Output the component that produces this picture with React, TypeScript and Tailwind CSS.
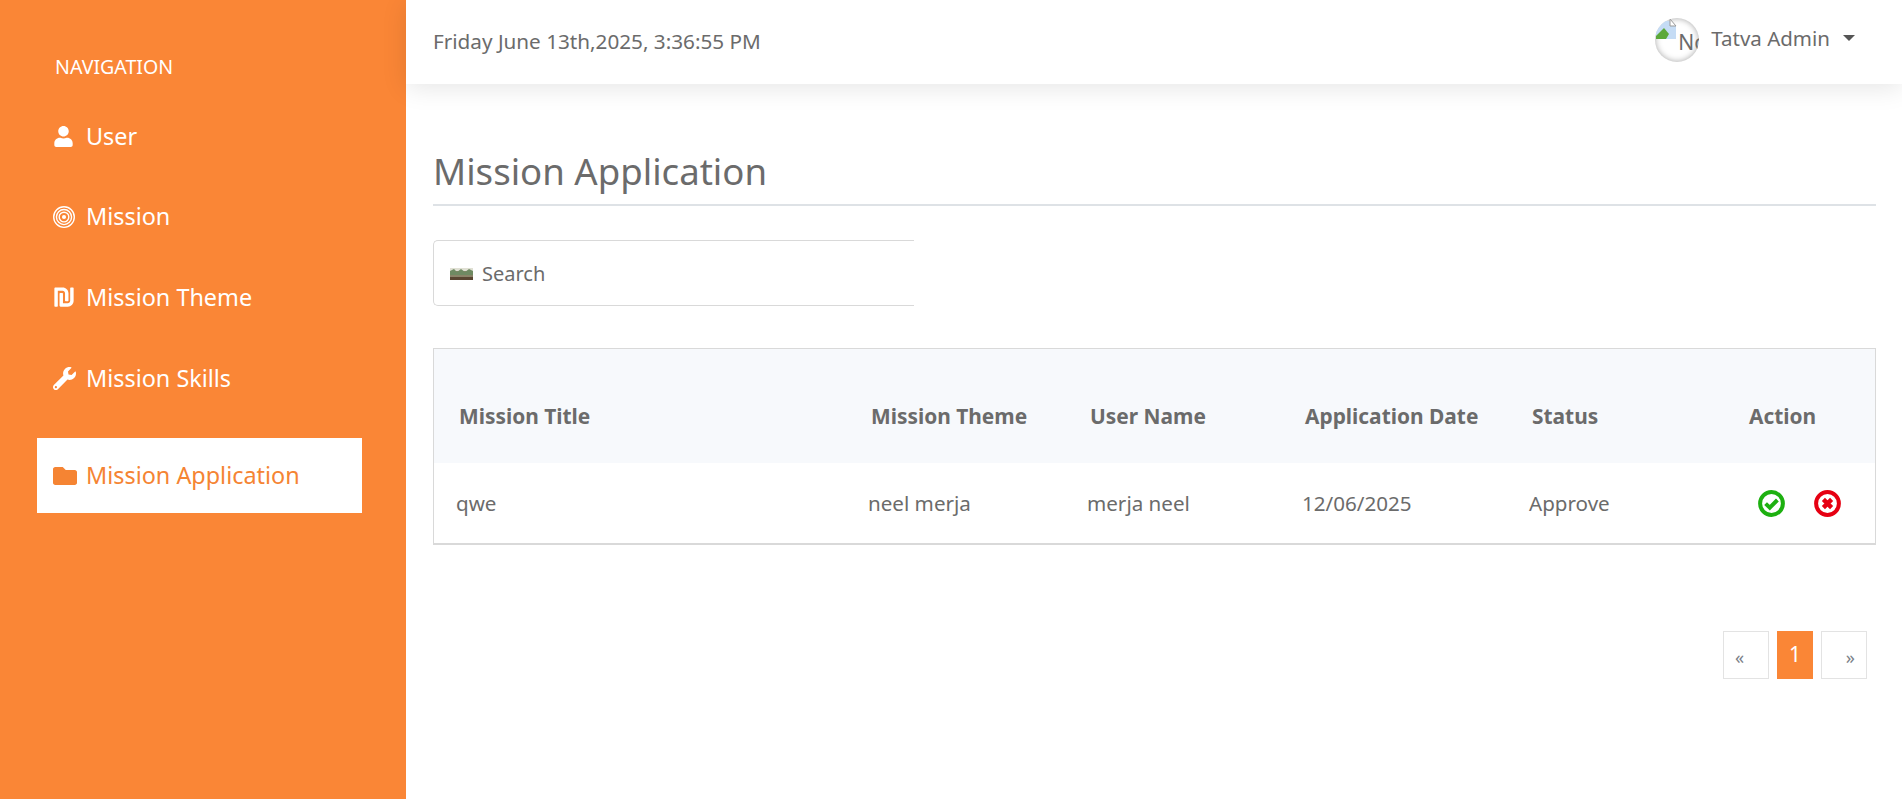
import { FaFolder, FaWrench, FaUser, FaShekelSign } from "react-icons/fa";
import { BsBullseye } from "react-icons/bs";

const font = { fontFamily: '"Noto Sans", sans-serif' };

const navItems = [
	{ label: "User", icon: <FaUser size={21} /> },
	{ label: "Mission", icon: <BsBullseye size={22} /> },
	{ label: "Mission Theme", icon: <FaShekelSign size={22} /> },
	{ label: "Mission Skills", icon: <FaWrench size={23} /> },
];

const BrokenImage = () => (
	<svg width="24" height="24" viewBox="0 0 24 24" className="absolute left-0 top-0">
		<path d="M1 3h14l6 5v13H1z" fill="#c5dcf5" />
		<path d="M1 21v-3l8-8 5 6-3 5z" fill="#5ca83a" />
		<path d="M15 1v7h6z" fill="#fff" stroke="#999" />
	</svg>
);

const SearchThumb = () => (
	<svg width="23" height="12" viewBox="0 0 23 12" className="shrink-0">
		<rect width="23" height="12" fill="#8a8468" />
		<rect y="0" width="23" height="3" fill="#e0e0d4" />
		<path d="M0 3l4-2 3 3 4-3 4 3 4-3 4 2v4H0z" fill="#6f8a62" />
		<rect y="9" width="23" height="3" fill="#5a4632" />
	</svg>
);

const CheckIcon = () => (
	<svg width="27" height="27" viewBox="0 0 27 27">
		<circle cx="13.5" cy="13.5" r="11.4" fill="none" stroke="#1db010" strokeWidth="4" />
		<path d="M7.6 13.6l4.2 4 7.6-7.6" fill="none" stroke="#1db010" strokeWidth="4" />
	</svg>
);

const CrossIcon = () => (
	<svg width="27" height="27" viewBox="0 0 27 27">
		<circle cx="13.5" cy="13.5" r="11.4" fill="none" stroke="#e60012" strokeWidth="4" />
		<path d="M9.4 9.4l8.2 8.2M17.6 9.4l-8.2 8.2" fill="none" stroke="#e60012" strokeWidth="4.4" />
	</svg>
);

const App = () => {
	return (
		<div className="flex h-screen overflow-hidden bg-white text-[#6b6b6b]" style={font}>
			<aside className="w-[406px] shrink-0 bg-[#fa8636] text-white">
				<p className="pl-[55px] pt-[53px] text-[19.6px] leading-[28px]">NAVIGATION</p>
				<nav className="mt-[15px] flex flex-col">
					{navItems.map((n) => (
						<a key={n.label} className="flex h-[80.6px] items-center pl-[53px] text-[23.4px]">
							<span className="flex w-[33px] shrink-0">{n.icon}</span>
							{n.label}
						</a>
					))}
					<a className="ml-[37px] mt-[20px] flex h-[75px] w-[325px] items-center bg-white pl-[16px] text-[23.4px] text-[#f58433]">
						<span className="flex w-[33px] shrink-0">
							<FaFolder size={24} />
						</span>
						Mission Application
					</a>
				</nav>
			</aside>
			<div className="min-w-0 flex-1">
				<header className="flex h-[84px] items-center justify-between pl-[27px] pr-[47px] shadow-[0_4px_24px_rgba(0,0,0,0.1)]">
					<span className="text-[20.7px]">Friday June 13th,2025, 3:36:55 PM</span>
					<div className="flex items-center pb-[4px]">
						<div className="relative flex h-[44px] w-[44px] items-end overflow-hidden rounded-full shadow-[inset_0_0_6px_rgba(0,0,0,0.35)]">
							<BrokenImage />
							<span className="absolute left-[23px] top-[10px] text-[21px] leading-[28px] whitespace-nowrap">No</span>
						</div>
						<span className="ml-[12px] mb-[4px] text-[20.5px] leading-[28px]">Tatva Admin</span>
						<span className="ml-[13px] mb-[4px] h-0 w-0 border-x-[6px] border-t-[6px] border-x-transparent border-t-[#555]" />
					</div>
				</header>
				<main className="pl-[27px] pr-[26px]">
					<h1 className="mt-[60px] border-b-2 border-[#dee2e6] pb-[5px] text-[36.6px] leading-[55px] font-normal">
						Mission Application
					</h1>
					<div className="mt-[34px] flex h-[66px] w-[481px] items-center gap-[9px] rounded-l-[5px] border border-r-0 border-[#d9d9d9] pl-[16px] pt-[2px] text-[20px]">
						<SearchThumb />
						Search
					</div>
					<div className="mt-[42px] border border-b-2 border-[#d9d9d9]">
						<table className="w-full table-fixed border-collapse">
							<colgroup>
								<col className="w-[412px]" />
								<col className="w-[219px]" />
								<col className="w-[215px]" />
								<col className="w-[227px]" />
								<col className="w-[219px]" />
								<col />
							</colgroup>
							<thead className="bg-[#f7f9fc]">
								<tr className="h-[114px] text-left text-[20.9px] font-bold">
									<th className="pl-[25px] pt-[22px]">Mission Title</th>
									<th className="pl-[25px] pt-[22px]">Mission Theme</th>
									<th className="pl-[25px] pt-[22px]">User Name</th>
									<th className="pl-[25px] pt-[22px]">Application Date</th>
									<th className="pl-[25px] pt-[22px]">Status</th>
									<th className="pl-[23px] pt-[22px]">Action</th>
								</tr>
							</thead>
							<tbody>
								<tr className="h-[80px] text-[20.6px]">
									<td className="pl-[22px]">qwe</td>
									<td className="pl-[22px]">neel merja</td>
									<td className="pl-[22px]">merja neel</td>
									<td className="pl-[22px]">12/06/2025</td>
									<td className="pl-[22px]">Approve</td>
									<td className="pl-[32px]">
										<div className="flex gap-[29px]">
											<CheckIcon />
											<CrossIcon />
										</div>
									</td>
								</tr>
							</tbody>
						</table>
					</div>
					<div className="mt-[86px] flex justify-end gap-[8px] pr-[9px]">
						<button className="flex h-[48px] w-[46px] items-center border border-[#e3e3e3] pl-[11px] pt-[4px] text-[18px] text-[#7a8088]">«</button>
						<button className="flex h-[48px] w-[36px] items-center justify-center bg-[#fa8636] text-[21px] text-white">1</button>
						<button className="flex h-[48px] w-[46px] items-center justify-end border border-[#e3e3e3] pr-[11px] pt-[4px] text-[18px] text-[#7a8088]">»</button>
					</div>
				</main>
			</div>
		</div>
	);
};

export default App;
